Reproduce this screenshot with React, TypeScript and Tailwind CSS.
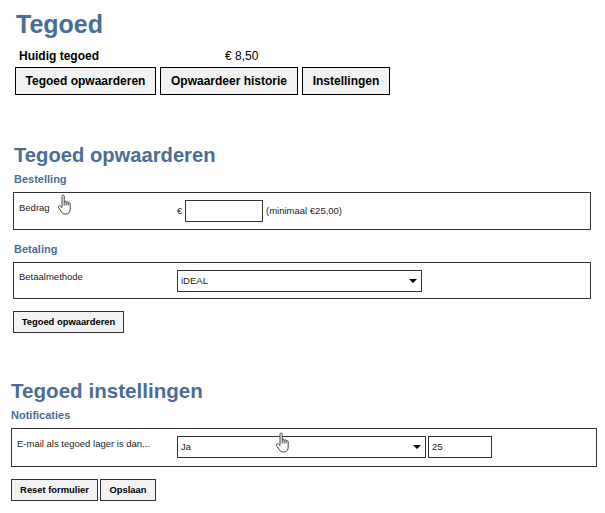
import type { ReactNode } from "react";

function HandCursor({ className }: { className: string }) {
  return (
    <svg
      className={className}
      width="16"
      height="21"
      viewBox="0 0 15 21"
      fill="#fff"
      stroke="#444"
      strokeWidth="1"
      strokeLinejoin="round"
    >
      <path d="M4.5 11V2.2c0-1.6 2.2-1.6 2.2 0V8c0-1.2 2-1.2 2 0v.6c0-1.1 2-1.1 2 0v.8c0-1 2-1 2 .2V15c0 3-1.6 5-4 5H7.5c-1.6 0-2.6-.8-3.4-2L1 13.6c-.8-1.3.8-2.6 1.9-1.5L4.5 13.6z" />
      <path d="M6.7 8v3.5M8.7 8.5v3M10.7 9.4v2.1" fill="none" />
    </svg>
  );
}

function TabButton({ children, className }: { children: ReactNode; className: string }) {
  return (
    <button className={`h-[28px] border border-black bg-[#f2f2f2] text-[12px] font-bold text-black ${className}`}>
      {children}
    </button>
  );
}

function SmallButton({ children, className }: { children: ReactNode; className: string }) {
  return (
    <button className={`h-[22px] border border-[#333] bg-[#f2f2f2] text-[9.4px] font-bold text-black ${className}`}>
      {children}
    </button>
  );
}

function SelectBox({ value, className }: { value: string; className: string }) {
  return (
    <div className={`flex h-[22px] items-center justify-between border border-[#333] bg-white pl-[3px] pr-[4px] text-[9.5px] text-[#222] ${className}`}>
      <span>{value}</span>
      <span className="h-0 w-0 border-x-[4px] border-t-[4px] border-x-transparent border-t-black" />
    </div>
  );
}

export default function App() {
  return (
    <div className="relative h-[513px] w-[605px] overflow-hidden bg-white font-['Liberation_Sans',Arial,sans-serif] text-black">
      <section className="pl-[15px] pt-[9px]">
        <h1 className="pl-px text-[25px] font-bold leading-[30px] text-[#4a6d98]">Tegoed</h1>
        <div className="mt-[10px] flex h-[15px] items-center pl-[4px] text-[12px] leading-[15px]">
          <span className="w-[206px] font-bold">Huidig tegoed</span>
          <span>€ 8,50</span>
        </div>
        <div className="mt-[3px] flex gap-[4px]">
          <TabButton className="w-[141px]">Tegoed opwaarderen</TabButton>
          <TabButton className="w-[138px]">Opwaardeer historie</TabButton>
          <TabButton className="w-[88px]">Instellingen</TabButton>
        </div>
      </section>

      <section className="pl-[13px] pr-[14px] pt-[47px]">
        <h2 className="pl-px text-[20.2px] font-bold leading-[26px] text-[#4a6d98]">Tegoed opwaarderen</h2>
        <h3 className="mt-[5px] pl-px text-[11px] font-bold leading-[13px] text-[#4a6d98]">Bestelling</h3>
        <div className="mt-[6px] flex h-[38px] border border-[#333] pl-[5px] text-[9.5px] text-[#222]">
          <div className="w-[158px] pt-[9px] leading-[12px]">Bedrag</div>
          <div className="flex items-start pt-[7px]">
            <span className="mt-[5px] w-[8px] leading-[12px]">€</span>
            <div className="h-[22px] w-[78px] border border-[#333] bg-white" />
            <span className="ml-[3px] mt-[5px] leading-[12px]">(minimaal €25,00)</span>
          </div>
        </div>
        <h3 className="mt-[13px] pl-px text-[11px] font-bold leading-[13px] text-[#4a6d98]">Betaling</h3>
        <div className="mt-[6px] flex h-[37px] border border-[#333] pl-[5px] text-[9.5px] text-[#222]">
          <div className="w-[158px] pt-[8px] leading-[12px]">Betaalmethode</div>
          <SelectBox value="iDEAL" className="mt-[7px] w-[245px]" />
        </div>
        <div className="mt-[12px] flex">
          <SmallButton className="w-[111px]">Tegoed opwaarderen</SmallButton>
        </div>
      </section>

      <section className="pl-[11px] pr-[8px] pt-[45px]">
        <h2 className="text-[20.6px] font-bold leading-[26px] text-[#4a6d98]">Tegoed instellingen</h2>
        <h3 className="mt-[5px] text-[11px] font-bold leading-[13px] text-[#4a6d98]">Notificaties</h3>
        <div className="mt-[6px] flex h-[39px] border border-[#333] pl-[5px] text-[9.5px] text-[#222]">
          <div className="w-[160px] pt-[9px] leading-[12px]">E-mail als tegoed lager is dan...</div>
          <SelectBox value="Ja" className="mt-[7px] w-[249px]" />
          <div className="ml-[2px] mt-[7px] flex h-[22px] w-[64px] items-center border border-[#333] bg-white pl-[3px]">25</div>
        </div>
        <div className="mt-[12px] flex gap-[2px]">
          <SmallButton className="w-[87px]">Reset formulier</SmallButton>
          <SmallButton className="w-[56px]">Opslaan</SmallButton>
        </div>
      </section>

      <HandCursor className="absolute left-[57px] top-[194px]" />
      <HandCursor className="absolute left-[275px] top-[432px]" />
    </div>
  );
}
